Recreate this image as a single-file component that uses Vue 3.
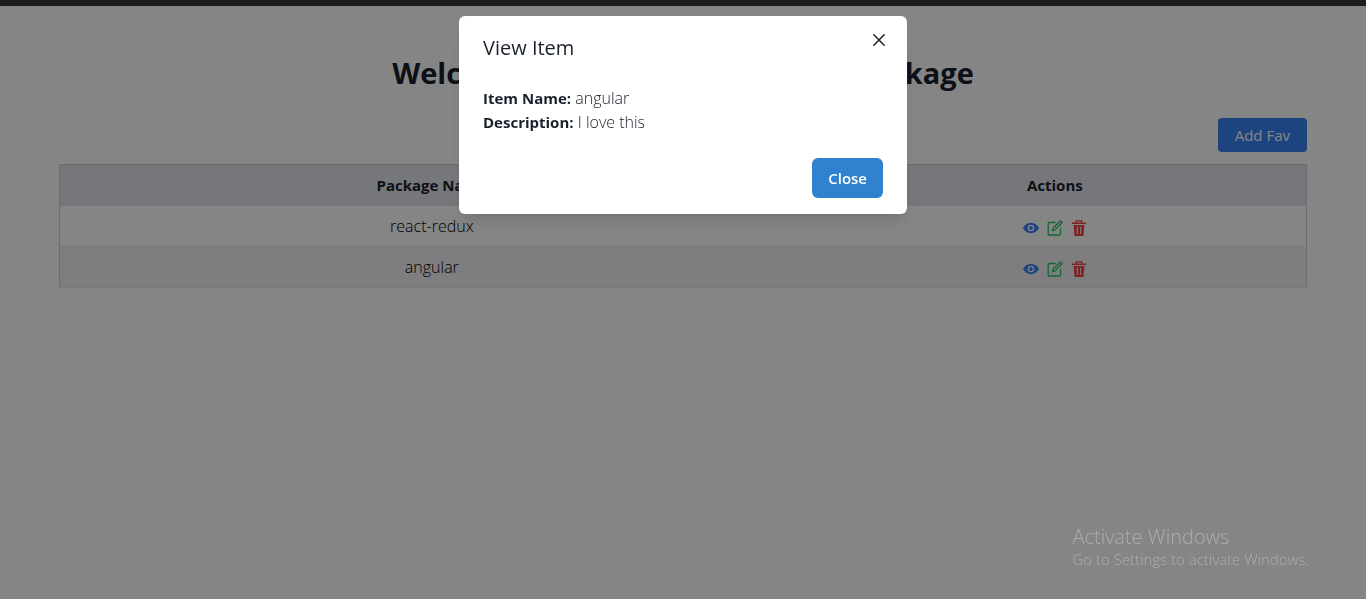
<script setup>
import { ref } from 'vue'

const items = ref([
  { name: 'react-redux', description: 'State management' },
  { name: 'angular', description: 'I love this' },
])
const selected = ref(items.value[1])
const open = ref(true)

function view(item) {
  selected.value = item
  open.value = true
}
</script>

<template>
  <div class="page">
    <div class="topbar"></div>
    <main class="content">
      <h1>Welcome To Your Favorite NPM Package</h1>
      <div class="toolbar">
        <button type="button" class="add">Add Fav</button>
      </div>
      <table>
        <colgroup>
          <col class="name-col" />
          <col />
        </colgroup>
        <thead>
          <tr>
            <th scope="col">Package Name</th>
            <th scope="col">Actions</th>
          </tr>
        </thead>
        <tbody>
          <tr v-for="item in items" :key="item.name">
            <td>{{ item.name }}</td>
            <td>
              <div class="actions">
                <button type="button" class="icon view" aria-label="View" @click="view(item)">
                  <svg viewBox="0 0 16 16">
                    <path fill="currentColor" fill-rule="evenodd" d="M8 2.800C4.500 2.800 1.500 5 0 8c1.500 3 4.500 5.200 8 5.200s6.500-2.200 8-5.200c-1.500-3-4.500-5.200-8-5.200zM8 4.700a3.300 3.300 0 1 1 0 6.600a3.300 3.300 0 0 1 0-6.600zM8 6.100a1.900 1.900 0 1 0 0 3.800a1.900 1.900 0 0 0 0-3.800z" />
                  </svg>
                </button>
                <button type="button" class="icon edit" aria-label="Edit">
                  <svg viewBox="0 0 16 16" fill="none" stroke="currentColor" stroke-width="1.300" stroke-linejoin="round" stroke-linecap="round">
                    <path d="M8 2.500H2.200Q1.200 2.500 1.200 3.500V14Q1.200 15 2.200 15H12.500Q13.500 15 13.500 14V8.500" />
                    <path d="M5.500 10.700L6.200 8L13 1.200Q13.600.700 14.300 1.300L14.700 1.700Q15.300 2.400 14.700 3L8 9.900Z" />
                  </svg>
                </button>
                <button type="button" class="icon delete" aria-label="Delete">
                  <svg viewBox="0 0 16 16">
                    <path fill="none" stroke="currentColor" stroke-width="1.400" d="M1 3.300H15M5.300 3V.900H10.700V3" />
                    <path fill="currentColor" fill-rule="evenodd" d="M2.600 5H13.400L12.500 16H3.500ZM5.800 6.500V14H6.800V6.500ZM9.200 6.500V14H10.200V6.500Z" />
                  </svg>
                </button>
              </div>
            </td>
          </tr>
        </tbody>
      </table>
    </main>

    <div v-if="open" class="overlay">
      <section class="modal" role="dialog" aria-modal="true" aria-labelledby="dialog-title">
        <header>
          <h2 id="dialog-title">View Item</h2>
          <button type="button" class="dismiss" aria-label="Close dialog" @click="open = false">
            <svg viewBox="0 0 12 12" fill="none" stroke="currentColor" stroke-width="1.500" stroke-linecap="round">
              <path d="M.800.800L11.200 11.200M11.200.800L.800 11.200" />
            </svg>
          </button>
        </header>
        <div class="body">
          <p><strong>Item Name:</strong> {{ selected.name }}</p>
          <p><strong>Description:</strong> {{ selected.description }}</p>
        </div>
        <footer>
          <button type="button" class="close" @click="open = false">Close</button>
        </footer>
      </section>
    </div>

    <aside class="watermark">
      <p class="watermark-title">Activate Windows</p>
      <p>Go to Settings to activate Windows.</p>
    </aside>
  </div>
</template>

<style>
body {
  margin: 0;
  background: #fff;
}
</style>

<style scoped>
* {
  box-sizing: border-box;
}
.page {
  min-height: 100vh;
  color: #1a202c;
  font: 400 15px/24px "Open Sans", "Noto Sans", sans-serif;
}
h1,
h2,
p {
  margin: 0;
}
button {
  font: inherit;
  border: 0;
  padding: 0;
  background: none;
  cursor: pointer;
}
svg {
  display: block;
  width: 100%;
  height: 100%;
}
.topbar {
  position: relative;
  z-index: 3;
  height: 6px;
  background: #1c1c1c;
}
.content {
  padding: 48px 59px 0;
}
h1 {
  font-size: 29px;
  line-height: 38px;
  font-weight: 700;
  text-align: center;
}
.toolbar {
  display: flex;
  justify-content: flex-end;
  padding: 26px 0 12px;
}
.add {
  height: 34px;
  padding: 0 17px;
  border-radius: 4px;
  background: #3b82f6;
  color: #fff;
}
table {
  width: 100%;
  table-layout: fixed;
  border-collapse: collapse;
  border: 1px solid #cbd0d9;
  border-bottom-color: #e5e7eb;
  text-align: center;
}
.name-col {
  width: 60%;
}
th {
  height: 41px;
  padding: 0 4px 0 0;
  font-weight: 700;
  background: #e2e5ec;
}
td {
  height: 41px;
  padding: 0 4px 0 0;
  font-size: 16px;
  font-weight: 300;
  color: #000;
  border-bottom: 1px solid #e5e7eb;
}
tbody tr:nth-child(even) {
  background: #f1f2f6;
}
.actions {
  display: flex;
  justify-content: center;
  gap: 8px;
  padding-top: 4px;
}
.icon {
  width: 16px;
  height: 16px;
}
.view {
  color: #3b82f6;
}
.edit {
  color: #22c55e;
}
.delete {
  color: #ef4444;
}
.overlay {
  position: fixed;
  inset: 0;
  z-index: 2;
  padding: 16px;
  background: rgba(0, 0, 0, 0.48);
}
.modal {
  position: relative;
  max-width: 448px;
  margin: 0 auto;
  border-radius: 6px;
  background: #fff;
  box-shadow: 0 10px 15px -3px rgba(0, 0, 0, 0.1), 0 4px 6px -2px rgba(0, 0, 0, 0.05);
}
header {
  padding: 16px 24px;
}
h2 {
  font-size: 20px;
  line-height: 32px;
  font-weight: 400;
}
.dismiss {
  position: absolute;
  top: 8px;
  right: 12px;
  width: 32px;
  height: 32px;
  padding: 10px;
  color: #1a202c;
}
.body {
  padding: 6px 24px 8px;
  font-size: 16px;
  font-weight: 300;
}
.body strong {
  font-size: 15px;
  font-weight: 700;
}
footer {
  display: flex;
  justify-content: flex-end;
  padding: 16px 24px;
}
.close {
  height: 40px;
  padding: 0 16px;
  border-radius: 6px;
  background: #3182ce;
  color: #fff;
  font-weight: 600;
}
.watermark {
  position: fixed;
  right: 57px;
  bottom: 30px;
  z-index: 4;
  color: #adadad;
  font-size: 15px;
  line-height: 20px;
  font-weight: 300;
}
.watermark-title {
  font-size: 20px;
  line-height: 24px;
}
</style>
